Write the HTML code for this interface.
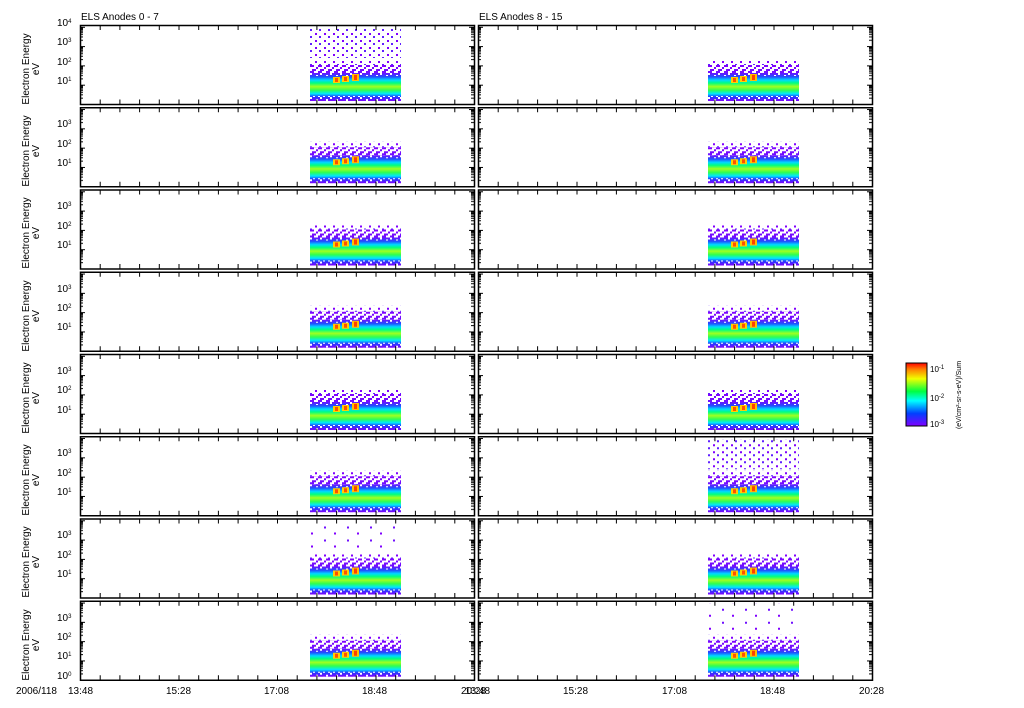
<!DOCTYPE html>
<html><head><meta charset="utf-8"><style>
body{margin:0;background:#fff;width:1024px;height:708px;overflow:hidden;position:relative;font-family:"Liberation Sans",sans-serif;}
svg{position:absolute;left:0;top:0}
.t{position:absolute;font-size:10px;color:#000;white-space:nowrap;line-height:10px}
.t sup{font-size:6px;vertical-align:top;position:relative;top:-2px}
.yl{position:absolute;font-size:10px;transform:rotate(-90deg);white-space:nowrap;text-align:center;line-height:10px;width:80px}
</style></head><body>
<svg width="1024" height="708" viewBox="0 0 1024 708">
<defs>
<linearGradient id="band" x1="0" y1="0" x2="0" y2="1">
<stop offset="0" stop-color="#8000ff"/><stop offset="0.22" stop-color="#7010ff"/><stop offset="0.33" stop-color="#2050ff"/><stop offset="0.42" stop-color="#00d8ff"/><stop offset="0.5" stop-color="#00ff80"/><stop offset="0.6" stop-color="#a0ff20"/><stop offset="0.7" stop-color="#30ff50"/><stop offset="0.8" stop-color="#00e8ff"/><stop offset="0.88" stop-color="#2040ff"/><stop offset="1" stop-color="#8000ff"/>
</linearGradient>
<linearGradient id="cb" x1="0" y1="1" x2="0" y2="0">
<stop offset="0" stop-color="#8000ff"/><stop offset="0.2" stop-color="#0040ff"/><stop offset="0.4" stop-color="#00ffff"/><stop offset="0.55" stop-color="#00ff40"/><stop offset="0.75" stop-color="#f0ff00"/><stop offset="0.9" stop-color="#ff8000"/><stop offset="1" stop-color="#ff0000"/>
</linearGradient>
<pattern id="wn" width="10" height="6" patternUnits="userSpaceOnUse">
<rect x="0" y="0" width="2" height="2" fill="#fff"/><rect x="6" y="2" width="2" height="2" fill="#fff"/><rect x="3" y="4" width="2" height="2" fill="#fff"/><rect x="8" y="4" width="2" height="2" fill="#fff"/>
</pattern>
<pattern id="wn2" width="8" height="6" patternUnits="userSpaceOnUse">
<rect x="0" y="0" width="4" height="2" fill="#fff"/><rect x="4" y="2" width="2" height="2" fill="#fff"/><rect x="2" y="4" width="4" height="2" fill="#fff"/><rect x="6" y="0" width="2" height="4" fill="#fff"/>
</pattern>
<pattern id="pd" width="23" height="13" patternUnits="userSpaceOnUse">
<rect x="1" y="1" width="2" height="2" fill="#8000ff"/><rect x="14" y="8" width="2" height="2" fill="#7010ff"/>
</pattern>
<pattern id="pd2" width="9" height="7" patternUnits="userSpaceOnUse">
<rect x="1" y="1" width="2" height="2" fill="#8000ff"/><rect x="5" y="4" width="2" height="2" fill="#6020ff"/>
</pattern>
<pattern id="yt" x="0" y="1.8" width="6" height="19.3" patternUnits="userSpaceOnUse">
<path d="M0 0.5H5M0 13.5H3M0 10.1H3M0 7.7H3M0 5.8H3M0 4.3H3M0 3H3M0 1.9H3M0 0.9H3" stroke="#000" stroke-width="1"/>
</pattern>
<pattern id="ytr" x="388" y="1.8" width="6" height="19.3" patternUnits="userSpaceOnUse">
<path d="M1 0.5H6M3 13.5H6M3 10.1H6M3 7.7H6M3 5.8H6M3 4.3H6M3 3H6M3 1.9H6M3 0.9H6" stroke="#000" stroke-width="1"/>
</pattern>
<g id="data">
<rect x="230" y="40" width="91" height="36" fill="url(#band)"/>
<rect x="230" y="40" width="91" height="8" fill="url(#wn2)"/>
<rect x="230" y="48" width="91" height="3" fill="url(#wn)"/>
<rect x="230" y="71" width="91" height="5" fill="url(#wn)"/>
<rect x="230" y="34" width="91" height="6" fill="url(#pd2)"/>
<rect x="253" y="52" width="7" height="6" fill="#ffd000"/><rect x="255" y="53" width="3" height="4" fill="#ff5000"/>
<rect x="262" y="51" width="7" height="6" fill="#ffd000"/><rect x="264" y="52" width="3" height="4" fill="#ff5000"/>
<rect x="272" y="49" width="7" height="7" fill="#ffc000"/><rect x="274" y="50" width="3" height="5" fill="#ff4000"/>
</g>
<g id="frame">
<rect x="0.5" y="0.5" width="394" height="79" fill="none" stroke="#000" stroke-width="1.5"/>
<line x1="0" y1="2.5" x2="394" y2="2.5" stroke="#000" stroke-width="5" stroke-dasharray="1 18.7"/>
<line x1="0" y1="77" x2="394" y2="77" stroke="#000" stroke-width="5" stroke-dasharray="1 18.7"/>
<rect x="0" y="1" width="6" height="78" fill="url(#yt)"/>
<rect x="388" y="1" width="6" height="78" fill="url(#ytr)"/>
</g>
<g id="p"><use href="#data"/><use href="#frame"/></g>
<g id="pn"><rect x="230" y="3" width="91" height="30" fill="url(#pd)"/><use href="#p"/></g>
<g id="ps"><rect x="230" y="3" width="91" height="30" fill="url(#pd2)"/><use href="#p"/></g>
</defs>
<use href="#ps" x="80" y="25"/><use href="#p" x="478" y="25"/>
<use href="#p" x="80" y="107.25"/><use href="#p" x="478" y="107.25"/>
<use href="#p" x="80" y="189.5"/><use href="#p" x="478" y="189.5"/>
<use href="#p" x="80" y="271.75"/><use href="#p" x="478" y="271.75"/>
<use href="#p" x="80" y="354"/><use href="#p" x="478" y="354"/>
<use href="#p" x="80" y="436.25"/><use href="#ps" x="478" y="436.25"/>
<use href="#pn" x="80" y="518.5"/><use href="#p" x="478" y="518.5"/>
<use href="#p" x="80" y="600.75"/><use href="#pn" x="478" y="600.75"/>
<rect x="906" y="363" width="21" height="63" fill="url(#cb)" stroke="#000"/>
</svg>
<div class="t" style="left:81px;top:13px">ELS Anodes 0 - 7</div>
<div class="t" style="left:479px;top:13px">ELS Anodes 8 - 15</div>
<div class="t" style="left:16px;top:687px">2006/118</div>
<div class="t" style="left:68px;top:687px">13:48</div>
<div class="t" style="left:166px;top:687px">15:28</div>
<div class="t" style="left:264px;top:687px">17:08</div>
<div class="t" style="left:362px;top:687px">18:48</div>
<div class="t" style="left:461px;top:687px">20:28</div>
<div class="t" style="left:465px;top:687px">13:48</div>
<div class="t" style="left:563px;top:687px">15:28</div>
<div class="t" style="left:662px;top:687px">17:08</div>
<div class="t" style="left:760px;top:687px">18:48</div>
<div class="t" style="left:859px;top:687px">20:28</div>
<div class="t" style="left:930px;top:365px;font-size:8px">10<sup>-1</sup></div>
<div class="t" style="left:930px;top:394px;font-size:8px">10<sup>-2</sup></div>
<div class="t" style="left:930px;top:420px;font-size:8px">10<sup>-3</sup></div>
<div class="yl" style="left:910px;top:390px;width:100px;font-size:7px">(eV/cm²-sr-s-eV)/Sum</div>

<div class="t" style="left:57px;top:19px">10<sup>4</sup></div>
<div class="t" style="left:57px;top:38px">10<sup>3</sup></div>
<div class="t" style="left:57px;top:58px">10<sup>2</sup></div>
<div class="t" style="left:57px;top:77px">10<sup>1</sup></div>
<div class="yl" style="left:-8px;top:59px">Electron Energy<br>eV</div>

<div class="t" style="left:57px;top:120px">10<sup>3</sup></div>
<div class="t" style="left:57px;top:140px">10<sup>2</sup></div>
<div class="t" style="left:57px;top:159px">10<sup>1</sup></div>
<div class="yl" style="left:-8px;top:141px">Electron Energy<br>eV</div>

<div class="t" style="left:57px;top:202px">10<sup>3</sup></div>
<div class="t" style="left:57px;top:222px">10<sup>2</sup></div>
<div class="t" style="left:57px;top:241px">10<sup>1</sup></div>
<div class="yl" style="left:-8px;top:223px">Electron Energy<br>eV</div>

<div class="t" style="left:57px;top:285px">10<sup>3</sup></div>
<div class="t" style="left:57px;top:304px">10<sup>2</sup></div>
<div class="t" style="left:57px;top:323px">10<sup>1</sup></div>
<div class="yl" style="left:-8px;top:306px">Electron Energy<br>eV</div>

<div class="t" style="left:57px;top:367px">10<sup>3</sup></div>
<div class="t" style="left:57px;top:386px">10<sup>2</sup></div>
<div class="t" style="left:57px;top:406px">10<sup>1</sup></div>
<div class="yl" style="left:-8px;top:388px">Electron Energy<br>eV</div>

<div class="t" style="left:57px;top:449px">10<sup>3</sup></div>
<div class="t" style="left:57px;top:469px">10<sup>2</sup></div>
<div class="t" style="left:57px;top:488px">10<sup>1</sup></div>
<div class="yl" style="left:-8px;top:470px">Electron Energy<br>eV</div>

<div class="t" style="left:57px;top:531px">10<sup>3</sup></div>
<div class="t" style="left:57px;top:551px">10<sup>2</sup></div>
<div class="t" style="left:57px;top:570px">10<sup>1</sup></div>
<div class="yl" style="left:-8px;top:552px">Electron Energy<br>eV</div>

<div class="t" style="left:57px;top:614px">10<sup>3</sup></div>
<div class="t" style="left:57px;top:633px">10<sup>2</sup></div>
<div class="t" style="left:57px;top:652px">10<sup>1</sup></div>
<div class="t" style="left:57px;top:672px">10<sup>0</sup></div>
<div class="yl" style="left:-8px;top:635px">Electron Energy<br>eV</div>
</body></html>
